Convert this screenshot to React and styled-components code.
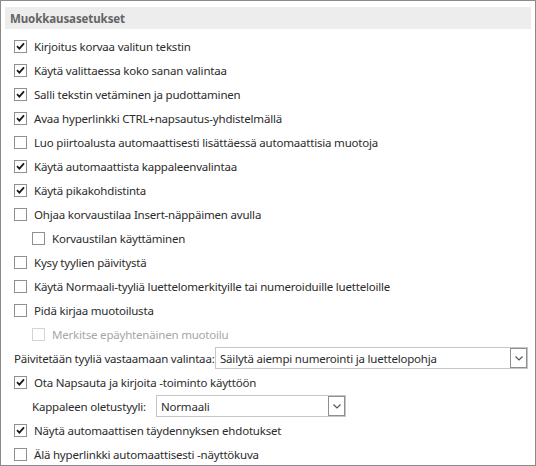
import { createGlobalStyle, styled } from 'styled-components';

const GlobalStyle = createGlobalStyle`
    body {
        margin: 0;
        font-family: "Noto Sans", "Open Sans", sans-serif;
        background: #fff;
    }
`;

const Panel = styled.div`
    width: 536px;
    height: 466px;
    box-sizing: border-box;
    border: 1px solid #8a8a8a;
    padding: 6px 4px 0;
    background: #fff;
    color: #2b2b2b;
    font-size: 11.5px;
    letter-spacing: -0.2px;
`;

const Header = styled.div`
    height: 22px;
    display: flex;
    align-items: center;
    padding-left: 5px;
    background: #ededed;
    color: #646464;
    font-weight: 700;
    font-size: 11.5px;
    letter-spacing: -0.1px;
`;

const List = styled.div`
    display: flex;
    flex-direction: column;
    margin-top: 5px;
`;

const Row = styled.label`
    height: 24px;
    display: flex;
    align-items: center;
    padding-left: ${(p) => (p.$indent ? 27 : 9)}px;
    color: ${(p) => (p.$disabled ? '#a6a6a6' : '#2b2b2b')};
    white-space: nowrap;
`;

const Box = styled.span`
    width: 13px;
    height: 13px;
    box-sizing: border-box;
    border: 1px solid ${(p) => (p.$disabled ? '#d4d4d4' : '#8f8f8f')};
    background: #fff;
    margin-right: 7px;
    display: flex;
    align-items: center;
    justify-content: center;
    flex-shrink: 0;
`;

const FieldRow = styled.div`
    height: 24px;
    display: flex;
    align-items: center;
    padding-left: ${(p) => (p.$indent ? 27 : 9)}px;
    white-space: nowrap;
`;

const FieldLabel = styled.span`
    width: ${(p) => p.$width}px;
    flex-shrink: 0;
`;

const Select = styled.div`
    width: ${(p) => p.$width}px;
    height: 22px;
    box-sizing: border-box;
    border: 1px solid #c6c6c6;
    display: flex;
    align-items: center;
    background: #fff;
`;

const SelectText = styled.span`
    flex: 1;
    padding-left: 4px;
`;

const Arrow = styled.span`
    width: 17px;
    height: 20px;
    box-sizing: border-box;
    border: 1px solid #8f8f8f;
    display: flex;
    align-items: center;
    justify-content: center;
`;

function Check({ checked, disabled }) {
    return (
        <Box $disabled={disabled}>
            {checked && (
                <svg width="9" height="8" viewBox="0 0 9 8">
                    <path d="M1 4.2 L3.4 6.6 L8 1.4" fill="none" stroke="#1a1a1a" strokeWidth="1.8" />
                </svg>
            )}
        </Box>
    );
}

function Option({ label, checked, indent, disabled }) {
    return (
        <Row $indent={indent} $disabled={disabled}>
            <Check checked={checked} disabled={disabled} />
            {label}
        </Row>
    );
}

function Dropdown({ value, width }) {
    return (
        <Select $width={width}>
            <SelectText>{value}</SelectText>
            <Arrow>
                <svg width="8" height="5" viewBox="0 0 8 5">
                    <path d="M0.5 0.5 L4 4 L7.5 0.5" fill="none" stroke="#555" strokeWidth="1.2" />
                </svg>
            </Arrow>
        </Select>
    );
}

const options = [
    { label: 'Kirjoitus korvaa valitun tekstin', checked: true },
    { label: 'Käytä valittaessa koko sanan valintaa', checked: true },
    { label: 'Salli tekstin vetäminen ja pudottaminen', checked: true },
    { label: 'Avaa hyperlinkki CTRL+napsautus-yhdistelmällä', checked: true },
    { label: 'Luo piirtoalusta automaattisesti lisättäessä automaattisia muotoja' },
    { label: 'Käytä automaattista kappaleenvalintaa', checked: true },
    { label: 'Käytä pikakohdistinta', checked: true },
    { label: 'Ohjaa korvaustilaa Insert-näppäimen avulla' },
    { label: 'Korvaustilan käyttäminen', indent: true },
    { label: 'Kysy tyylien päivitystä' },
    { label: 'Käytä Normaali-tyyliä luettelomerkityille tai numeroiduille luetteloille' },
    { label: 'Pidä kirjaa muotoilusta' },
    { label: 'Merkitse epäyhtenäinen muotoilu', indent: true, disabled: true },
];

export default function App() {
    return (
        <>
            <GlobalStyle />
            <Panel>
                <Header>Muokkausasetukset</Header>
                <List>
                    {options.map((o) => (
                        <Option key={o.label} {...o} />
                    ))}
                    <FieldRow>
                        <FieldLabel $width={201}>Päivitetään tyyliä vastaamaan valintaa:</FieldLabel>
                        <Dropdown value="Säilytä aiempi numerointi ja luettelopohja" width={313} />
                    </FieldRow>
                    <Option label="Ota Napsauta ja kirjoita -toiminto käyttöön" checked />
                    <FieldRow $indent>
                        <FieldLabel $width={124}>Kappaleen oletustyyli:</FieldLabel>
                        <Dropdown value="Normaali" width={190} />
                    </FieldRow>
                    <Option label="Näytä automaattisen täydennyksen ehdotukset" checked />
                    <Option label="Älä hyperlinkki automaattisesti -näyttökuva" />
                </List>
            </Panel>
        </>
    );
}
